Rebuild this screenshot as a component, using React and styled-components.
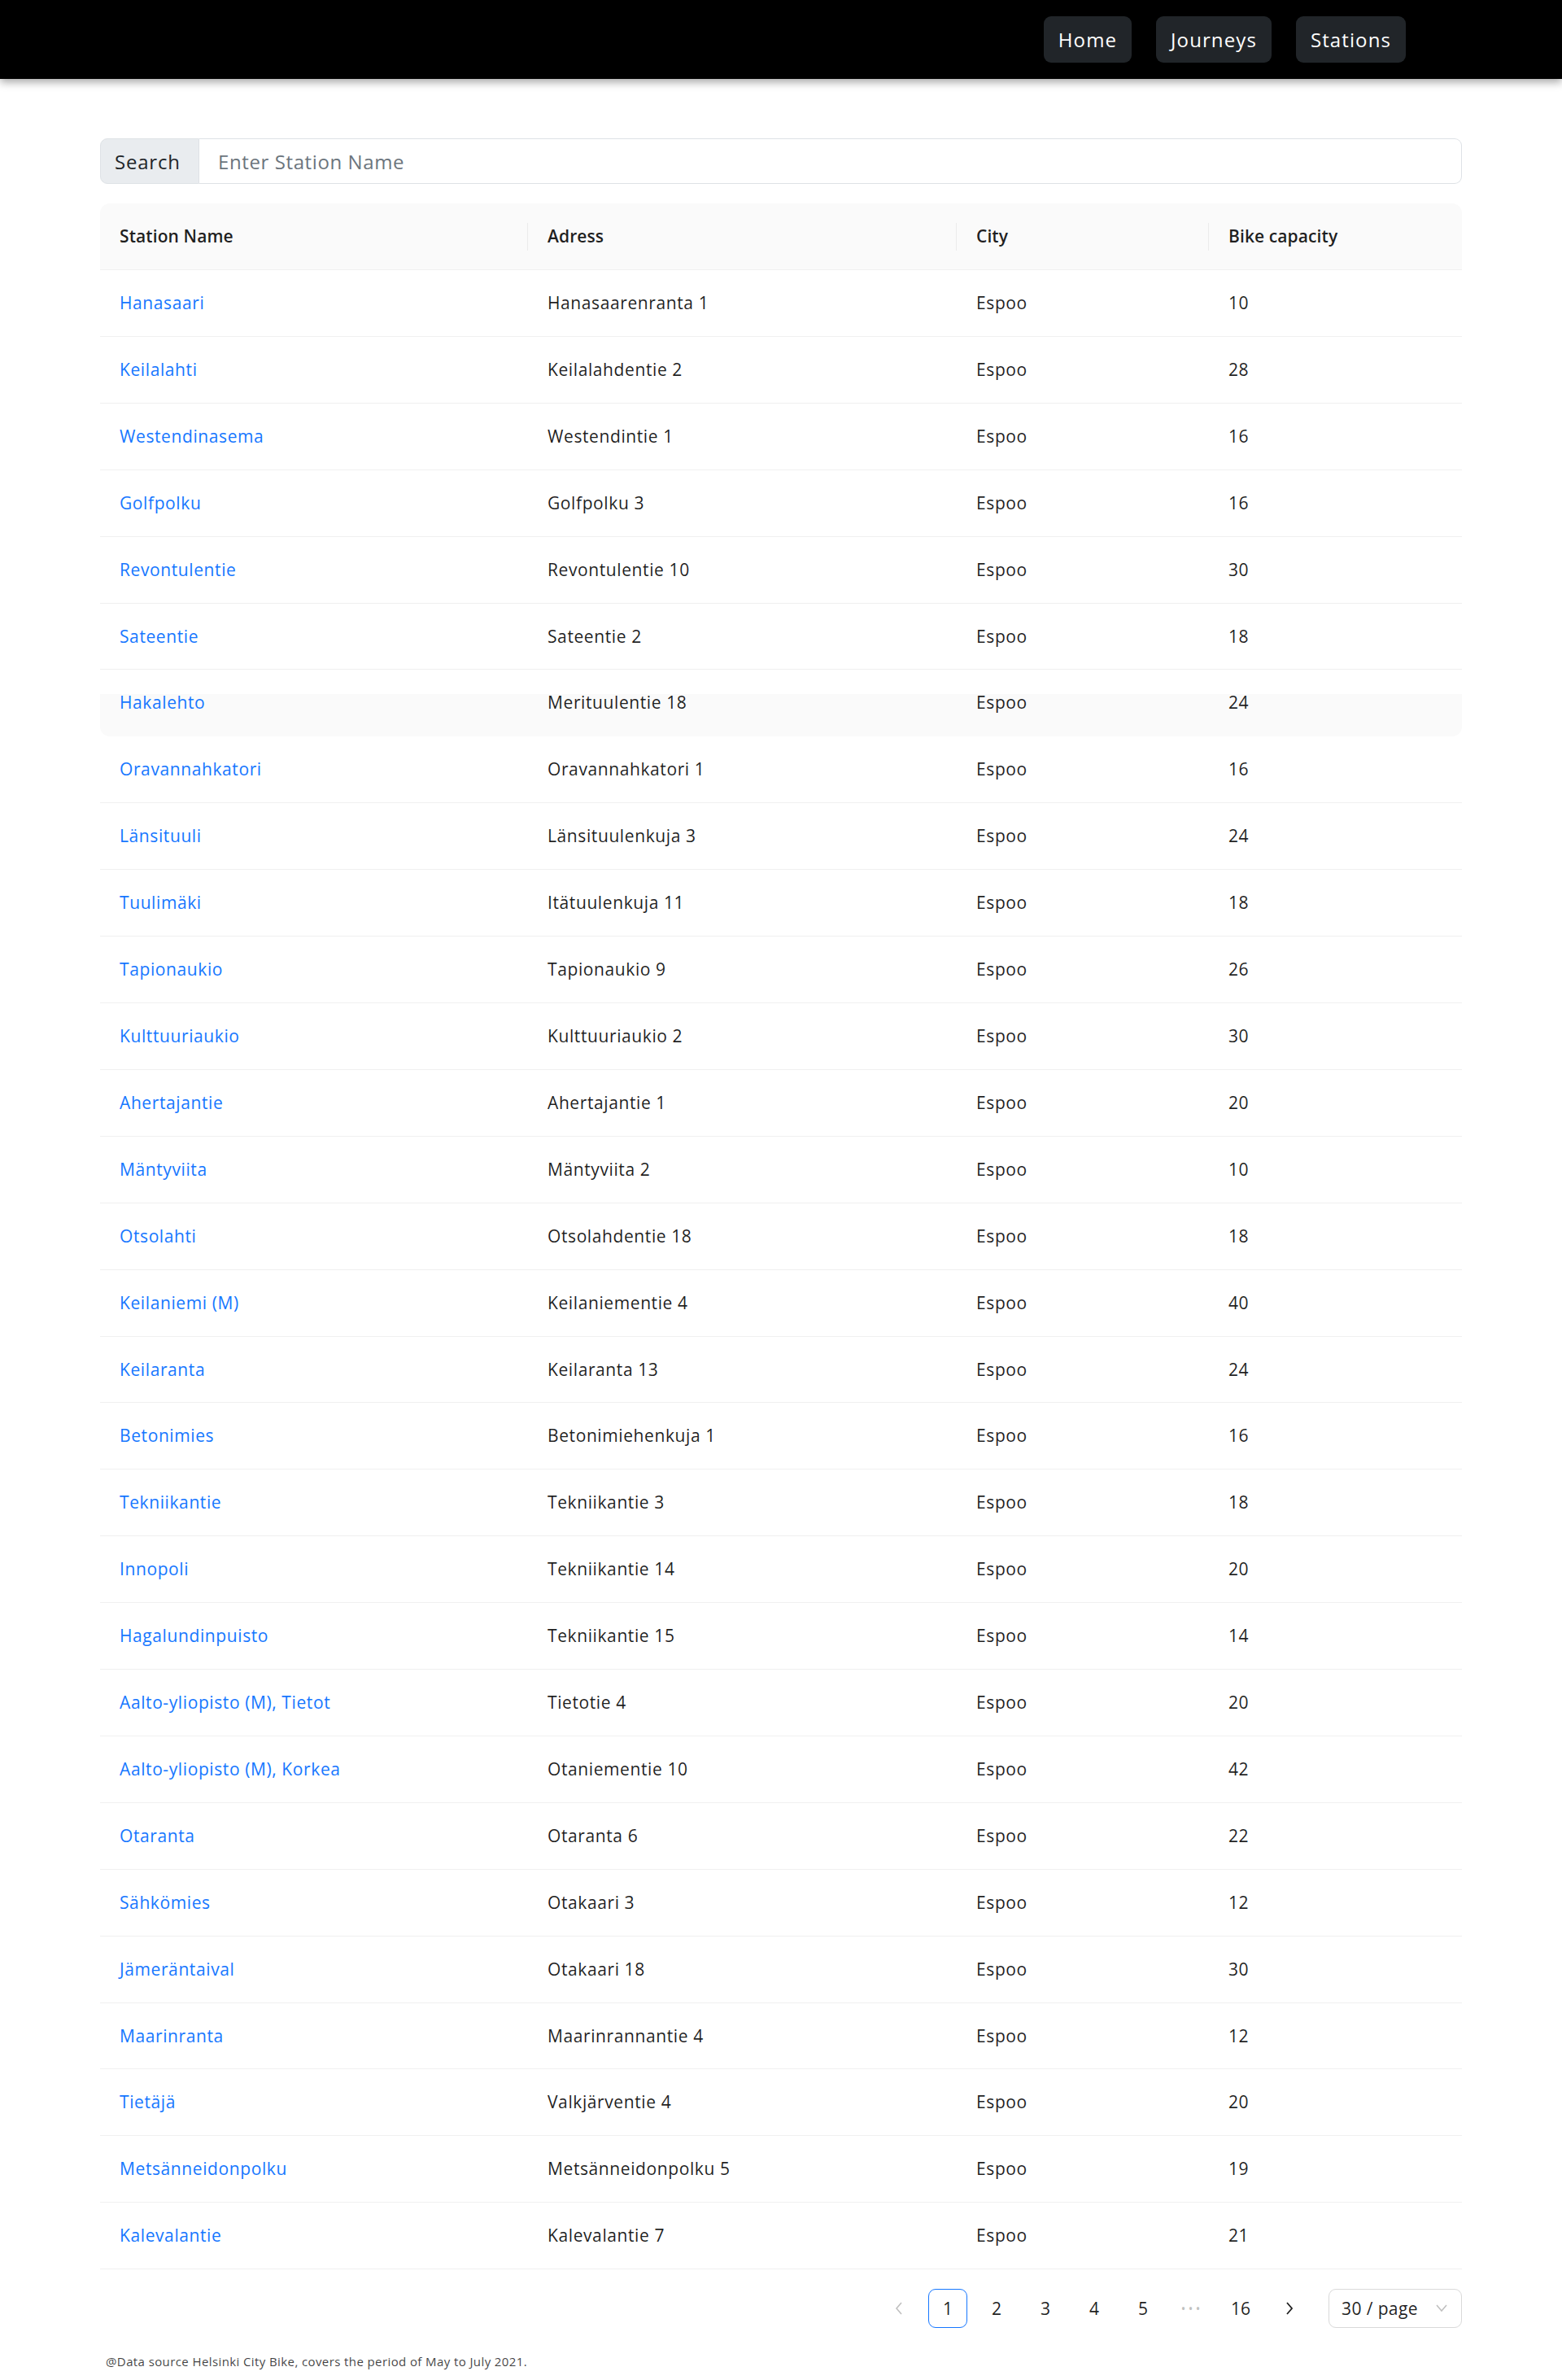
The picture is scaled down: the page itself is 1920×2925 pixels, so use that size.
import React from "react";
import styled, { createGlobalStyle, css } from "styled-components";

const stations = [
  ["Hanasaari", "Hanasaarenranta 1", "Espoo", 10],
  ["Keilalahti", "Keilalahdentie 2", "Espoo", 28],
  ["Westendinasema", "Westendintie 1", "Espoo", 16],
  ["Golfpolku", "Golfpolku 3", "Espoo", 16],
  ["Revontulentie", "Revontulentie 10", "Espoo", 30],
  ["Sateentie", "Sateentie 2", "Espoo", 18],
  ["Hakalehto", "Merituulentie 18", "Espoo", 24],
  ["Oravannahkatori", "Oravannahkatori 1", "Espoo", 16],
  ["Länsituuli", "Länsituulenkuja 3", "Espoo", 24],
  ["Tuulimäki", "Itätuulenkuja 11", "Espoo", 18],
  ["Tapionaukio", "Tapionaukio 9", "Espoo", 26],
  ["Kulttuuriaukio", "Kulttuuriaukio 2", "Espoo", 30],
  ["Ahertajantie", "Ahertajantie 1", "Espoo", 20],
  ["Mäntyviita", "Mäntyviita 2", "Espoo", 10],
  ["Otsolahti", "Otsolahdentie 18", "Espoo", 18],
  ["Keilaniemi (M)", "Keilaniementie 4", "Espoo", 40],
  ["Keilaranta", "Keilaranta 13", "Espoo", 24],
  ["Betonimies", "Betonimiehenkuja 1", "Espoo", 16],
  ["Tekniikantie", "Tekniikantie 3", "Espoo", 18],
  ["Innopoli", "Tekniikantie 14", "Espoo", 20],
  ["Hagalundinpuisto", "Tekniikantie 15", "Espoo", 14],
  ["Aalto-yliopisto (M), Tietot", "Tietotie 4", "Espoo", 20],
  ["Aalto-yliopisto (M), Korkea", "Otaniementie 10", "Espoo", 42],
  ["Otaranta", "Otaranta 6", "Espoo", 22],
  ["Sähkömies", "Otakaari 3", "Espoo", 12],
  ["Jämeräntaival", "Otakaari 18", "Espoo", 30],
  ["Maarinranta", "Maarinrannantie 4", "Espoo", 12],
  ["Tietäjä", "Valkjärventie 4", "Espoo", 20],
  ["Metsänneidonpolku", "Metsänneidonpolku 5", "Espoo", 19],
  ["Kalevalantie", "Kalevalantie 7", "Espoo", 21],
];

const pages = ["1", "2", "3", "4", "5", "•••", "16"];

function App() {
  return (
    <>
      <GlobalStyle />
      <StNav>
        <StNavBtn>Home</StNavBtn>
        <StNavBtn>Journeys</StNavBtn>
        <StNavBtn>Stations</StNavBtn>
      </StNav>

      <StContainer>
        <StSearch>
          <StAddon>Search</StAddon>
          <StInput placeholder="Enter Station Name" />
        </StSearch>

        <StTable>
          <StHeadRow>
            <StHeadCell>Station Name</StHeadCell>
            <StHeadCell>Adress</StHeadCell>
            <StHeadCell>City</StHeadCell>
            <StHeadCell last>Bike capacity</StHeadCell>
          </StHeadRow>
          {stations.map((s, i) => (
            <StRow key={s[0]} hovered={i === 6}>
              <StCell>
                <StLink href="#">{s[0]}</StLink>
              </StCell>
              <StCell>{s[1]}</StCell>
              <StCell>{s[2]}</StCell>
              <StCell>{s[3]}</StCell>
            </StRow>
          ))}
        </StTable>

        <StPager>
          <StArrow disabled>
            <svg width="14" height="20" viewBox="0 0 14 20">
              <path d="M10 3 L4 10 L10 17" fill="none" stroke="currentColor" strokeWidth="1.6" />
            </svg>
          </StArrow>
          {pages.map((p) =>
            p === "•••" ? (
              <StEllipsis key={p}>•••</StEllipsis>
            ) : (
              <StPage key={p} active={p === "1"}>
                {p}
              </StPage>
            )
          )}
          <StArrow>
            <svg width="14" height="20" viewBox="0 0 14 20">
              <path d="M4 3 L10 10 L4 17" fill="none" stroke="currentColor" strokeWidth="1.8" />
            </svg>
          </StArrow>
          <StSizer>
            30 / page
            <svg width="16" height="12" viewBox="0 0 16 12">
              <path d="M2 2 L8 9 L14 2" fill="none" stroke="#bfbfbf" strokeWidth="1.5" />
            </svg>
          </StSizer>
        </StPager>

        <StFooter>@Data source Helsinki City Bike, covers the period of May to July 2021.</StFooter>
      </StContainer>
    </>
  );
}

export default App;

const GlobalStyle = createGlobalStyle`
  body {
    margin: 0;
    background: #fff;
    font-family: "Open Sans", "Liberation Sans", sans-serif;
    color: rgba(0, 0, 0, 0.88);
  }
`;

const StNav = styled.nav`
  height: 97px;
  background: #000;
  box-shadow: 0 4px 10px rgba(0, 0, 0, 0.35);
  display: flex;
  align-items: center;
  justify-content: flex-end;
  gap: 30px;
  padding-right: 192px;
  box-sizing: border-box;
`;

const StNavBtn = styled.button`
  height: 57px;
  padding: 0 18px;
  background: #212529;
  color: #fff;
  border: none;
  border-radius: 9px;
  font-family: inherit;
  font-size: 24px;
  letter-spacing: 1.1px;
  cursor: pointer;
`;

const StContainer = styled.main`
  width: 1674px;
  margin: 73px auto 0;
`;

const StSearch = styled.div`
  display: flex;
  height: 56px;
`;

const StAddon = styled.span`
  display: flex;
  align-items: center;
  padding: 0 17px;
  width: 122px;
  box-sizing: border-box;
  background: #e9ecef;
  border: 1px solid #dee2e6;
  border-radius: 9px 0 0 9px;
  font-size: 24px;
  letter-spacing: 0.8px;
  color: #212529;
`;

const StInput = styled.input`
  flex: 1;
  border: 1px solid #dee2e6;
  border-left: none;
  border-radius: 0 9px 9px 0;
  padding: 0 23px;
  font-family: inherit;
  font-size: 24px;
  letter-spacing: 0.6px;
  color: #212529;
  outline: none;
  &::placeholder {
    color: #6c757d;
  }
`;

const StTable = styled.div`
  margin-top: 24px;
  font-size: 21px;
`;

const cols = css`
  display: grid;
  grid-template-columns: 526px 527px 310px 1fr;
`;

const StHeadRow = styled.div`
  ${cols};
  background: #fafafa;
  border-radius: 12px 12px 0 0;
  border-bottom: 1px solid #f0f0f0;
`;

const StHeadCell = styled.div`
  position: relative;
  padding: 24px;
  line-height: 33px;
  font-weight: 600;
  letter-spacing: 0.1px;
  color: rgba(0, 0, 0, 0.88);
  &::after {
    content: "";
    display: ${({ last }) => (last ? "none" : "block")};
    position: absolute;
    right: 0;
    top: 50%;
    width: 1px;
    height: 34px;
    transform: translateY(-50%);
    background: rgba(0, 0, 0, 0.06);
  }
`;

const StRow = styled.div`
  ${cols};
  position: relative;
  border-bottom: 1px solid ${({ hovered }) => (hovered ? "transparent" : "#f0f0f0")};
  &::before {
    content: "";
    display: ${({ hovered }) => (hovered ? "block" : "none")};
    position: absolute;
    left: 0;
    right: 0;
    top: 30px;
    bottom: -1px;
    background: #fafafa;
    border-radius: 0 0 12px 12px;
  }
`;

const StCell = styled.div`
  position: relative;
  padding: 24px;
  line-height: 32.9px;
  letter-spacing: 0.6px;
  color: rgba(0, 0, 0, 0.88);
`;

const StLink = styled.a`
  color: #1677ff;
  text-decoration: none;
`;

const StPager = styled.div`
  display: flex;
  justify-content: flex-end;
  align-items: center;
  gap: 12px;
  margin-top: 24px;
  font-size: 21px;
`;

const StPage = styled.span`
  min-width: 48px;
  height: 48px;
  box-sizing: border-box;
  display: flex;
  align-items: center;
  justify-content: center;
  border-radius: 9px;
  border: 1.5px solid ${({ active }) => (active ? "#1677ff" : "transparent")};
  color: rgba(0, 0, 0, 0.88);
`;

const StEllipsis = styled(StPage)`
  color: rgba(0, 0, 0, 0.25);
  letter-spacing: 3px;
  font-size: 16px;
`;

const StArrow = styled.span`
  width: 48px;
  height: 48px;
  display: flex;
  align-items: center;
  justify-content: center;
  color: ${({ disabled }) => (disabled ? "rgba(0, 0, 0, 0.25)" : "rgba(0, 0, 0, 0.88)")};
`;

const StSizer = styled.span`
  margin-left: 12px;
  width: 164px;
  height: 48px;
  box-sizing: border-box;
  display: flex;
  align-items: center;
  justify-content: space-between;
  padding: 0 16px 0 15px;
  border: 1.5px solid #d9d9d9;
  border-radius: 9px;
  letter-spacing: 0.4px;
  color: rgba(0, 0, 0, 0.88);
`;

const StFooter = styled.p`
  margin: 31px 0 0 7px;
  font-size: 15px;
  letter-spacing: 0.4px;
  color: rgba(0, 0, 0, 0.75);
`;
